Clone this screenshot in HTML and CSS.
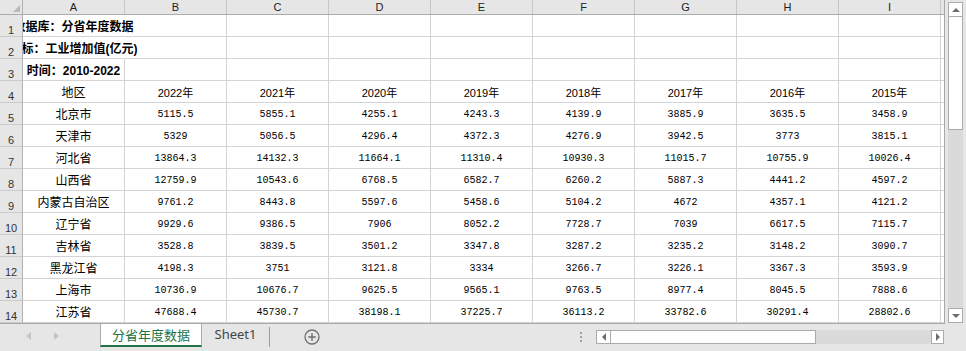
FILE: index.html
```html
<!DOCTYPE html>
<html lang="zh-CN">
<head>
    <meta charset="UTF-8">
    <title>分省年度数据</title>
    <link rel="stylesheet" href="styles.css">
</head>
<body>
<div class="app">
    <div class="main">
        <div class="sheet">
            <div class="head">
                <div class="corner"><span class="corner-mark"></span></div>
                <div class="letter">A</div><div class="letter">B</div><div class="letter">C</div>
                <div class="letter">D</div><div class="letter">E</div><div class="letter">F</div>
                <div class="letter">G</div><div class="letter">H</div><div class="letter">I</div>
                <div class="fill"></div>
            </div>

            <div class="row"><div class="rownum">1</div><div class="cells">
                <div class="cell title">数据库：分省年度数据</div><div class="cell"></div><div class="cell"></div><div class="cell"></div><div class="cell"></div><div class="cell"></div><div class="cell"></div><div class="cell"></div><div class="cell"></div><div class="fill"></div>
            </div></div>
            <div class="row"><div class="rownum">2</div><div class="cells">
                <div class="cell title">指标：工业增加值(亿元)</div><div class="cell"></div><div class="cell"></div><div class="cell"></div><div class="cell"></div><div class="cell"></div><div class="cell"></div><div class="cell"></div><div class="cell"></div><div class="fill"></div>
            </div></div>
            <div class="row"><div class="rownum">3</div><div class="cells">
                <div class="cell bold">时间：2010-2022</div><div class="cell"></div><div class="cell"></div><div class="cell"></div><div class="cell"></div><div class="cell"></div><div class="cell"></div><div class="cell"></div><div class="cell"></div><div class="fill"></div>
            </div></div>
            <div class="row"><div class="rownum">4</div><div class="cells">
                <div class="cell name">地区</div><div class="cell year">2022年</div><div class="cell year">2021年</div><div class="cell year">2020年</div><div class="cell year">2019年</div><div class="cell year">2018年</div><div class="cell year">2017年</div><div class="cell year">2016年</div><div class="cell year">2015年</div><div class="fill"></div>
            </div></div>
            <div class="row"><div class="rownum">5</div><div class="cells">
                <div class="cell name">北京市</div><div class="cell num">5115.5</div><div class="cell num">5855.1</div><div class="cell num">4255.1</div><div class="cell num">4243.3</div><div class="cell num">4139.9</div><div class="cell num">3885.9</div><div class="cell num">3635.5</div><div class="cell num">3458.9</div><div class="fill"></div>
            </div></div>
            <div class="row"><div class="rownum">6</div><div class="cells">
                <div class="cell name">天津市</div><div class="cell num">5329</div><div class="cell num">5056.5</div><div class="cell num">4296.4</div><div class="cell num">4372.3</div><div class="cell num">4276.9</div><div class="cell num">3942.5</div><div class="cell num">3773</div><div class="cell num">3815.1</div><div class="fill"></div>
            </div></div>
            <div class="row"><div class="rownum">7</div><div class="cells">
                <div class="cell name">河北省</div><div class="cell num">13864.3</div><div class="cell num">14132.3</div><div class="cell num">11664.1</div><div class="cell num">11310.4</div><div class="cell num">10930.3</div><div class="cell num">11015.7</div><div class="cell num">10755.9</div><div class="cell num">10026.4</div><div class="fill"></div>
            </div></div>
            <div class="row"><div class="rownum">8</div><div class="cells">
                <div class="cell name">山西省</div><div class="cell num">12759.9</div><div class="cell num">10543.6</div><div class="cell num">6768.5</div><div class="cell num">6582.7</div><div class="cell num">6260.2</div><div class="cell num">5887.3</div><div class="cell num">4441.2</div><div class="cell num">4597.2</div><div class="fill"></div>
            </div></div>
            <div class="row"><div class="rownum">9</div><div class="cells">
                <div class="cell name">内蒙古自治区</div><div class="cell num">9761.2</div><div class="cell num">8443.8</div><div class="cell num">5597.6</div><div class="cell num">5458.6</div><div class="cell num">5104.2</div><div class="cell num">4672</div><div class="cell num">4357.1</div><div class="cell num">4121.2</div><div class="fill"></div>
            </div></div>
            <div class="row"><div class="rownum">10</div><div class="cells">
                <div class="cell name">辽宁省</div><div class="cell num">9929.6</div><div class="cell num">9386.5</div><div class="cell num">7906</div><div class="cell num">8052.2</div><div class="cell num">7728.7</div><div class="cell num">7039</div><div class="cell num">6617.5</div><div class="cell num">7115.7</div><div class="fill"></div>
            </div></div>
            <div class="row"><div class="rownum">11</div><div class="cells">
                <div class="cell name">吉林省</div><div class="cell num">3528.8</div><div class="cell num">3839.5</div><div class="cell num">3501.2</div><div class="cell num">3347.8</div><div class="cell num">3287.2</div><div class="cell num">3235.2</div><div class="cell num">3148.2</div><div class="cell num">3090.7</div><div class="fill"></div>
            </div></div>
            <div class="row"><div class="rownum">12</div><div class="cells">
                <div class="cell name">黑龙江省</div><div class="cell num">4198.3</div><div class="cell num">3751</div><div class="cell num">3121.8</div><div class="cell num">3334</div><div class="cell num">3266.7</div><div class="cell num">3226.1</div><div class="cell num">3367.3</div><div class="cell num">3593.9</div><div class="fill"></div>
            </div></div>
            <div class="row"><div class="rownum">13</div><div class="cells">
                <div class="cell name">上海市</div><div class="cell num">10736.9</div><div class="cell num">10676.7</div><div class="cell num">9625.5</div><div class="cell num">9565.1</div><div class="cell num">9763.5</div><div class="cell num">8977.4</div><div class="cell num">8045.5</div><div class="cell num">7888.6</div><div class="fill"></div>
            </div></div>
            <div class="row"><div class="rownum">14</div><div class="cells">
                <div class="cell name">江苏省</div><div class="cell num">47688.4</div><div class="cell num">45730.7</div><div class="cell num">38198.1</div><div class="cell num">37225.7</div><div class="cell num">36113.2</div><div class="cell num">33782.6</div><div class="cell num">30291.4</div><div class="cell num">28802.6</div><div class="fill"></div>
            </div></div>
        </div>

        <div class="vscroll">
            <div class="vtrack">
                <div class="sbtn"><span class="tri-up"></span></div>
                <div class="vthumb"></div>
                <div class="vrest"></div>
                <div class="sbtn"><span class="tri-down"></span></div>
            </div>
        </div>
    </div>

    <div class="bottom">
        <div class="nav">
            <span class="nav-left"></span>
            <span class="nav-right"></span>
        </div>
        <div class="tab active">分省年度数据</div>
        <div class="tab">Sheet1</div>
        <div class="tab-sep"></div>
        <div class="add-sheet">
            <svg width="16" height="16" viewBox="0 0 16 16">
                <circle cx="8" cy="8" r="7" fill="none" stroke="#707070" stroke-width="1.3"/>
                <path d="M8 4.2v7.6M4.2 8h7.6" stroke="#707070" stroke-width="1.5"/>
            </svg>
        </div>
        <div class="spacer"></div>
        <div class="dots"><span></span><span></span><span></span></div>
        <div class="hscroll">
            <div class="hbtn"><span class="tri-left"></span></div>
            <div class="hthumb"></div>
            <div class="hrest"></div>
            <div class="hbtn"><span class="tri-right"></span></div>
        </div>
    </div>
</div>
</body>
</html>
```

FILE: styles.css
```css
* {
    box-sizing: border-box;
}
body {
    margin: 0;
    background-color: #e6e6e6;
    font-family: "Liberation Sans", Arial, sans-serif;
}
.app {
    width: 966px;
    height: 351px;
    overflow: hidden;
    display: flex;
    flex-direction: column;
}
.main {
    display: flex;
    height: 324px;
}

/* Grid */
.sheet {
    width: 945px;
    background-color: white;
    border-right: 1px solid #a9a9a9;
    border-bottom: 1px solid #a9a9a9;
    overflow: hidden;
}
.head {
    display: flex;
    height: 15px;
    background-color: #e6e6e6;
    border-bottom: 1px solid #ababab;
}
.corner {
    width: 23px;
    flex: none;
    border-right: 1px solid #b1b1b1;
    display: flex;
    justify-content: flex-end;
    align-items: flex-end;
    padding: 0 2px 2px 0;
}
.corner-mark {
    width: 0;
    height: 0;
    border-left: 7px solid transparent;
    border-bottom: 7px solid #b9b9b9;
}
.letter {
    width: 102px;
    flex: none;
    border-right: 1px solid #c6c6c6;
    text-align: center;
    font-size: 11px;
    line-height: 14px;
    color: #222;
}
.fill {
    flex: 1;
}
.row {
    display: flex;
    height: 22px;
}
.rownum {
    width: 23px;
    flex: none;
    background-color: #e6e6e6;
    border-right: 1px solid #b1b1b1;
    border-bottom: 1px solid #cbcbcb;
    display: flex;
    justify-content: center;
    align-items: flex-end;
    font-size: 11px;
    line-height: 12px;
    color: #333;
}
.cells {
    display: flex;
    flex: 1;
    overflow: hidden;
}
.cells .fill {
    border-bottom: 1px solid #d4d4d4;
}
.cell {
    width: 102px;
    flex: none;
    border-right: 1px solid #d4d4d4;
    border-bottom: 1px solid #d4d4d4;
    display: flex;
    justify-content: center;
    align-items: center;
    white-space: nowrap;
    color: #000;
}
.cell.title, .cell.bold {
    font-family: "Liberation Sans", "Noto Sans CJK SC", sans-serif;
    font-weight: bold;
    font-size: 12px;
}
.cell.title {
    border-right-color: transparent;
}
.name {
    font-family: "Noto Sans CJK SC", sans-serif;
    font-size: 12px;
}
.year {
    font-family: "Liberation Sans", "Noto Sans CJK SC", sans-serif;
    font-size: 11px;
}
.num {
    font-family: "Liberation Mono", monospace;
    font-size: 10px;
    padding-top: 1px;
}

/* Vertical scrollbar */
.vscroll {
    width: 21px;
    padding: 2px 3px 1px 3px;
}
.vtrack {
    height: 100%;
    display: flex;
    flex-direction: column;
    background-color: #dadada;
}
.sbtn {
    height: 15px;
    background-color: white;
    border: 1px solid #ababab;
    display: flex;
    justify-content: center;
    align-items: center;
}
.vthumb {
    height: 113px;
    background-color: white;
    border: 1px solid #ababab;
    border-top: none;
}
.vrest {
    flex: 1;
}
.tri-up, .tri-down, .tri-left, .tri-right {
    width: 0;
    height: 0;
}
.tri-up {
    border-left: 4px solid transparent;
    border-right: 4px solid transparent;
    border-bottom: 4px solid #6d6d6d;
}
.tri-down {
    border-left: 4px solid transparent;
    border-right: 4px solid transparent;
    border-top: 4px solid #6d6d6d;
}
.tri-left {
    border-top: 4px solid transparent;
    border-bottom: 4px solid transparent;
    border-right: 4px solid #6d6d6d;
}
.tri-right {
    border-top: 4px solid transparent;
    border-bottom: 4px solid transparent;
    border-left: 4px solid #6d6d6d;
}

/* Sheet tabs */
.bottom {
    flex: 1;
    display: flex;
    align-items: flex-start;
}
.nav {
    width: 100px;
    height: 24px;
    display: flex;
    align-items: center;
    padding-left: 26px;
    gap: 23px;
}
.nav-left {
    width: 0;
    height: 0;
    border-top: 4px solid transparent;
    border-bottom: 4px solid transparent;
    border-right: 5px solid #c4c4c4;
}
.nav-right {
    width: 0;
    height: 0;
    border-top: 4px solid transparent;
    border-bottom: 4px solid transparent;
    border-left: 5px solid #c4c4c4;
}
.tab {
    width: 67px;
    height: 23px;
    text-align: center;
    font-family: "Noto Sans", "Liberation Sans", sans-serif;
    font-size: 13px;
    line-height: 21px;
    color: #444;
}
.tab.active {
    width: 102px;
    background-color: white;
    border-left: 1px solid #ababab;
    border-right: 1px solid #ababab;
    border-bottom: 2px solid #217346;
    font-family: "Noto Sans CJK SC", sans-serif;
    color: #217346;
}
.tab-sep {
    width: 1px;
    height: 20px;
    margin-top: 3px;
    background-color: #9d9d9d;
}
.add-sheet {
    margin-left: 34px;
    margin-top: 5px;
    height: 16px;
}
.add-sheet svg {
    display: block;
}
.spacer {
    flex: 1;
}
.dots {
    width: 2px;
    margin-top: 8px;
    margin-right: 14px;
    display: flex;
    flex-direction: column;
    gap: 2px;
}
.dots span {
    width: 2px;
    height: 2px;
    background-color: #a0a0a0;
}

/* Horizontal scrollbar */
.hscroll {
    width: 348px;
    height: 14px;
    margin-top: 6px;
    margin-right: 22px;
    display: flex;
    background-color: #dadada;
}
.hbtn {
    width: 15px;
    background-color: white;
    border: 1px solid #ababab;
    display: flex;
    justify-content: center;
    align-items: center;
}
.hbtn:last-child {
    width: 13px;
}
.hthumb {
    width: 205px;
    background-color: white;
    border: 1px solid #ababab;
    border-left: none;
}
.hrest {
    flex: 1;
}
```
